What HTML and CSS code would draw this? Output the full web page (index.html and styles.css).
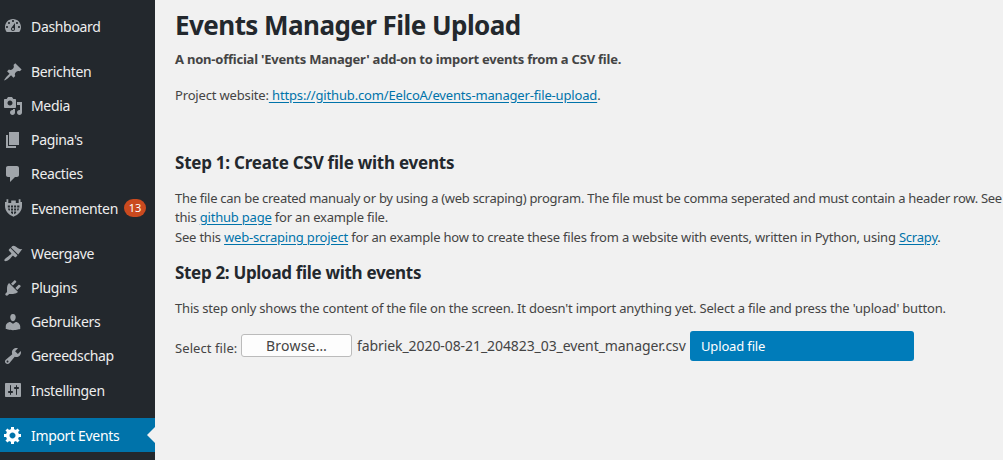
FILE: index.html
```html
<!DOCTYPE html>
<html lang="nl">
<head>
<meta charset="utf-8">
<title>Events Manager File Upload</title>
<link rel="stylesheet" href="styles.css">
</head>
<body>
<nav class="menu">
  <a class="item"><svg class="icon" viewBox="0 0 20 20"><path fill-rule="evenodd" d="M3.76 16h12.48c1.1-1.37 1.76-3.11 1.76-5 0-4.42-3.58-8-8-8s-8 3.58-8 8c0 1.89.66 3.63 1.76 5zM10 4c.55 0 1 .45 1 1s-.45 1-1 1-1-.45-1-1 .45-1 1-1zM6 6c.55 0 1 .45 1 1s-.45 1-1 1-1-.45-1-1 .45-1 1-1zm8 0c.55 0 1 .45 1 1s-.45 1-1 1-1-.45-1-1 .45-1 1-1zm-5.370 5.550L12 7v6c0 1.1-.9 2-2 2s-2-.9-2-2c0-.57.24-1.080.63-1.450zM4 10c.55 0 1 .45 1 1s-.45 1-1 1-1-.45-1-1 .45-1 1-1zm12 0c.55 0 1 .45 1 1s-.45 1-1 1-1-.45-1-1 .45-1 1-1zm-5 3c0-.55-.45-1-1-1s-1 .45-1 1 .45 1 1 1 1-.45 1-1z"/></svg><span class="label">Dashboard</span></a>
  <div class="separator"></div>
  <a class="item"><svg class="icon" viewBox="0 0 20 20"><path d="M10.44 3.02l1.82-1.82 6.36 6.35-1.83 1.82c-1.05-.68-2.48-.57-3.41.36l-.75.75c-.92.93-1.04 2.35-.35 3.41l-1.83 1.82-2.41-2.41-2.8 2.79c-.42.42-3.38 2.71-3.8 2.29s1.86-3.39 2.28-3.81l2.79-2.79L4.1 9.36l1.83-1.82c1.05.69 2.48.57 3.4-.36l.75-.75c.93-.92 1.05-2.35.36-3.41z"/></svg><span class="label">Berichten</span></a>
  <a class="item"><svg class="icon" viewBox="0 0 20 20"><path fill-rule="evenodd" d="M13 11V4c0-.55-.45-1-1-1h-1.67L9 1H5L3.67 3H2c-.55 0-1 .45-1 1v7c0 .55.45 1 1 1h10c.55 0 1-.45 1-1zM7 4.5c1.38 0 2.5 1.12 2.5 2.5S8.38 9.5 7 9.5 4.5 8.38 4.5 7 5.62 4.5 7 4.5zM14 6h5v10.5c0 1.38-1.12 2.5-2.5 2.5S14 17.88 14 16.5s1.12-2.5 2.5-2.5c.17 0 .34.02.5.05V9h-3V6zm-4 8.05V13h2v3.5c0 1.38-1.12 2.5-2.5 2.5S7 17.88 7 16.5 8.12 14 9.5 14c.17 0 .34.02.5.05z"/></svg><span class="label">Media</span></a>
  <a class="item"><svg class="icon" viewBox="0 0 20 20"><path d="M6 15V2h10v13H6zm-1 1h8v2H3V5h2v11z"/></svg><span class="label">Pagina's</span></a>
  <a class="item"><svg class="icon" viewBox="0 0 20 20"><path d="M5 2h9c1.1 0 2 .9 2 2v7c0 1.1-.9 2-2 2h-2l-5 5v-5H5c-1.1 0-2-.9-2-2V4c0-1.1.9-2 2-2z"/></svg><span class="label">Reacties</span></a>
  <a class="item"><svg class="icon" viewBox="0 0 20 20"><path fill-rule="evenodd" d="M2 4h1.500V1.200h1.800V5h2.900V2.500h4.600V5h2.900V1.200h1.800V4H19v4c0 5-3.500 8.700-8.500 10.700C5.500 16.700 2 13 2 8zM4.800 7.600v1.900h2.100v-1.900zm3.200 0v1.900h2v-1.900zm3.100 0v1.900h2v-1.900zm3.100 0v1.900h2.200v-1.900zM4.900 10.600c.2.700.5 1.300.9 1.900h1.100v-1.900zm3.100 0v1.900h2v-1.900zm3.100 0v1.900h2v-1.900zm3.100 0v1.900h1c.4-.6.700-1.200.9-1.900zM8 13.600v1.500l2 1.200v-2.700zm3.100 0v2.700l2-1.200v-1.500z"/></svg><span class="label events">Evenementen</span><span class="count">13</span></a>
  <div class="separator"></div>
  <a class="item"><svg class="icon" viewBox="0 0 20 20"><path d="M15.200 10.500L8.100 3.400l1-1.100c.6-.8 2.300-.7 3.500.1 1.200.8 1.600 1.300 3 2.100 1.100.6 2 .8 3.700.6zM14.500 11.300L7.300 4.100 6 5.400c-.4.4-.4 1 0 1.400l2.100 2.100c.3.300.3.700 0 1-.9.9-2.600 2.200-4.100 3.400-1.500 1.200-3.300 2.500-2.500 3.500s2.700.3 4-.7c1.300-1 2.700-3 3.900-4.200.3-.3.800-.3 1.100 0l1.200 1.100c.4.4 1 .4 1.400 0z"/></svg><span class="label">Weergave</span></a>
  <a class="item"><svg class="icon" viewBox="0 0 20 20"><path d="M13.110 4.360L9.870 7.600 8 5.730l3.240-3.240c.35-.34 1.050-.2 1.560.32.52.51.66 1.210.31 1.550zm-8 1.770l.91-1.120 9.010 9.010-1.190.84c-.71.71-2.630 1.160-3.820 1.160H6.140L4.900 17.260c-.59.59-1.540.59-2.120 0-.59-.58-.59-1.530 0-2.120l1.240-1.240v-3.880c0-1.130.4-3.190 1.090-3.890zm7.260 3.970l3.240-3.240c.34-.35 1.040-.21 1.550.31.52.51.66 1.210.31 1.550l-3.240 3.250z"/></svg><span class="label">Plugins</span></a>
  <a class="item"><svg class="icon" viewBox="0 0 20 20"><path d="M10 9.250c-2.270 0-2.730-3.440-2.730-3.440C7 4.020 7.820 2 9.970 2c2.160 0 2.980 2.020 2.710 3.810 0 0-.41 3.440-2.680 3.440zm0 2.570L12.720 10c2.390 0 4.520 2.330 4.520 4.530v2.490s-3.650 1.130-7.240 1.130c-3.650 0-7.240-1.130-7.240-1.130v-2.490c0-2.250 1.940-4.480 4.470-4.480z"/></svg><span class="label">Gebruikers</span></a>
  <a class="item"><svg class="icon" viewBox="0 0 20 20"><path fill-rule="evenodd" d="M16.680 9.770c-1.340 1.340-3.300 1.670-4.950.99l-5.410 6.520c-.99.99-2.590.99-3.580 0s-.99-2.590 0-3.570l6.520-5.420c-.68-1.650-.35-3.610.99-4.950 1.280-1.280 3.120-1.620 4.720-1.060l-2.890 2.890 2.820 2.820 2.860-2.870c.53 1.580.18 3.390-1.080 4.650zM3.810 16.210c.4.39 1.040.39 1.430 0 .4-.4.4-1.040 0-1.430-.39-.4-1.030-.4-1.430 0-.39.39-.39 1.030 0 1.430z"/></svg><span class="label">Gereedschap</span></a>
  <a class="item"><svg class="icon" viewBox="0 0 20 20"><path fill-rule="evenodd" d="M18 16V4c0-.55-.45-1-1-1H3c-.55 0-1 .45-1 1v12c0 .55.45 1 1 1h14c.55 0 1-.45 1-1zM8 11h1c.55 0 1 .45 1 1s-.45 1-1 1H8v1.500c0 .28-.22.5-.5.5s-.5-.22-.5-.5V13H6c-.55 0-1-.45-1-1s.45-1 1-1h1V5.500c0-.28.22-.5.5-.5s.5.22.5.5V11zm5-2h-1c-.55 0-1-.45-1-1s.45-1 1-1h1V5.500c0-.28.22-.5.5-.5s.5.22.5.5V7h1c.55 0 1 .45 1 1s-.45 1-1 1h-1v5.500c0 .28-.22.5-.5.5s-.5-.22-.5-.5V9z"/></svg><span class="label">Instellingen</span></a>
  <div class="separator last"></div>
  <a class="item current"><svg class="icon" viewBox="0 0 20 20"><path fill-rule="evenodd" d="M18 12h-2.180c-.17.7-.44 1.350-.81 1.930l1.540 1.540-2.100 2.100-1.540-1.540c-.58.36-1.230.63-1.910.79V19H8v-2.180c-.68-.16-1.330-.43-1.910-.79l-1.540 1.540-2.120-2.120 1.540-1.540c-.36-.58-.63-1.230-.79-1.910H1V9.030h2.170c.16-.7.44-1.350.8-1.940L2.430 5.550l2.100-2.100 1.540 1.540c.58-.37 1.240-.64 1.930-.81V2h3v2.180c.68.16 1.330.43 1.910.79l1.540-1.540 2.120 2.120-1.540 1.540c.36.59.64 1.240.8 1.940H18V12zm-8.500 1.500c1.660 0 3-1.340 3-3s-1.340-3-3-3-3 1.340-3 3 1.340 3 3 3z"/></svg><span class="label">Import Events</span></a>
</nav>
<main class="content">
  <h1 class="title">Events Manager File Upload</h1>
  <p class="intro">A non-official 'Events Manager' add-on to import events from a CSV file.</p>
  <p class="project">Project website:<a class="link"> https://github.com/EelcoA/events-manager-file-upload</a>.</p>
  <h2 class="step step-one">Step 1: Create CSV file with events</h2>
  <p class="explain"><span class="tight">The file can be created manualy or by using a (web scraping) program. The file must be comma seperated and must contain a header row. See</span><br>
  this <a class="link">github page</a> for an example file.<br>
  See this <a class="link">web-scraping project</a> for an example how to create these files from a website with events, written in Python, using <a class="link">Scrapy</a>.</p>
  <h2 class="step step-two">Step 2: Upload file with events</h2>
  <p class="note">This step only shows the content of the file on the screen. It doesn't import anything yet. Select a file and press the 'upload' button.</p>
  <form class="upload">
    <label class="select">Select file:</label>
    <button type="button" class="browse">Browse…</button>
    <span class="filename">fabriek_2020-08-21_204823_03_event_manager.csv</span>
    <button type="button" class="submit">Upload file</button>
  </form>
</main>
</body>
</html>
```
FILE: styles.css
```css
* { box-sizing: border-box; }
body {
  margin: 0;
  display: flex;
  height: 460px;
  overflow: hidden;
  background: #f1f1f1;
  color: #444;
  font: 13px/19.5px "Noto Sans", "Open Sans", sans-serif;
}
.menu {
  flex: 0 0 155px;
  padding-top: 9.4px;
  background: #23282d;
  color: #eee;
  font-size: 14px;
  letter-spacing: -0.33px;
}
.item {
  display: flex;
  align-items: center;
  height: 34.2px;
  padding-left: 3px;
  position: relative;
}
.icon {
  width: 20px;
  height: 20px;
  margin-right: 8px;
  fill: #a0a5aa;
}
.separator { height: 11px; }
.last { height: 10.6px; }
.count {
  width: 22px;
  height: 18px;
  margin-left: 6px;
  border-radius: 9px;
  background: #ca4a1f;
  color: #fff;
  font-size: 11px;
  line-height: 18px;
  text-align: center;
  letter-spacing: 0;
}
.current { background: #0073aa; color: #fff; }
.current .icon { fill: #fff; }
.current .label { padding-top: 1px; }
.current::after {
  content: "";
  position: absolute;
  right: 0;
  top: 9px;
  border: 8px solid transparent;
  border-left-width: 0;
  border-right-color: #f1f1f1;
}
.content {
  flex: 1;
  min-width: 0;
  padding: 10px 0 0 20px;
  white-space: nowrap;
}
p, h1, h2 { margin: 0; }
.title {
  color: #23282d;
  font-size: 26px;
  line-height: 30px;
  letter-spacing: -0.55px;
}
.intro { margin-top: 9.5px; font-weight: 700; letter-spacing: -0.22px; }
.project { margin-top: 16.5px; letter-spacing: -0.165px; }
.step {
  color: #23282d;
  font-size: 17px;
  line-height: 24px;
  letter-spacing: -0.24px;
}
.step-one { margin-top: 46px; }
.explain { margin-top: 13.7px; letter-spacing: -0.2px; }
.tight { letter-spacing: -0.28px; }
.step-two { margin-top: 14.3px; letter-spacing: -0.32px; }
.note { margin-top: 13.3px; letter-spacing: -0.19px; }
.link {
  color: #0073aa;
  text-decoration: underline;
  text-underline-offset: 2px;
}
.upload {
  display: flex;
  height: 30px;
  margin-top: 13px;
  align-items: center;
}
.select { flex: 0 0 66px; padding-top: 5px; letter-spacing: 0.08px; }
.browse {
  flex: 0 0 111px;
  height: 23px;
  margin-bottom: 1px;
  padding: 0;
  border: 1px solid #bbb;
  border-radius: 3px;
  background: #fdfdfd;
  color: #444;
  font: 14px/20px "Noto Sans", sans-serif;
  letter-spacing: 0.2px;
}
.filename {
  flex: 0 0 338px;
  padding: 0 0 1.5px 5px;
  font-size: 14px;
  letter-spacing: -0.08px;
}
.submit {
  flex: 0 0 224px;
  height: 30px;
  padding: 0 11px;
  border: 0;
  border-radius: 3px;
  background: #007cba;
  color: #fff;
  font: 13px/30px "Noto Sans", sans-serif;
  letter-spacing: -0.15px;
  text-align: left;
}
```
